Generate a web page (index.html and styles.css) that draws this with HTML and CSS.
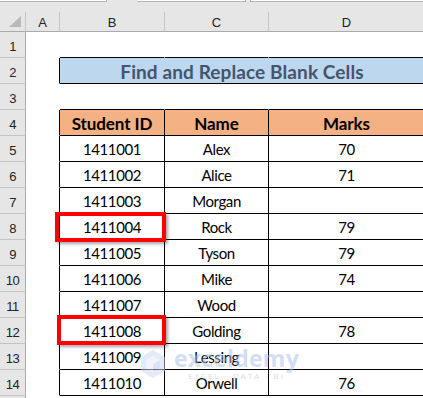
FILE: index.html
```html
<!DOCTYPE html>
<html lang="en">
<head>
    <meta charset="UTF-8">
    <meta name="viewport" content="width=device-width, initial-scale=1.0">
    <title>Find and Replace Blank Cells</title>
    <link rel="stylesheet" href="styles.css">
</head>
<body>
    <div class="window">
        <div class="formula-bar">
            <span class="fbox name-box"></span>
            <span class="fbox fx-box"></span>
            <span class="fbox input-box"></span>
        </div>

        <div class="sheet">
            <!-- column headers -->
            <div class="ch corner"><span class="corner-mark"></span></div>
            <div class="ch">A</div>
            <div class="ch">B</div>
            <div class="ch">C</div>
            <div class="ch">D</div>

            <!-- row 1 -->
            <div class="rh">1</div>
            <div class="cell"></div>
            <div class="cell above"></div>
            <div class="cell above"></div>
            <div class="cell above"></div>

            <!-- row 2 -->
            <div class="rh">2</div>
            <div class="cell before"></div>
            <div class="cell tb title">Find and Replace Blank Cells</div>

            <!-- row 3 -->
            <div class="rh">3</div>
            <div class="cell"></div>
            <div class="cell above"></div>
            <div class="cell above"></div>
            <div class="cell above"></div>

            <!-- row 4 -->
            <div class="rh">4</div>
            <div class="cell before"></div>
            <div class="cell tb head">Student ID</div>
            <div class="cell tb head">Name</div>
            <div class="cell tb head">Marks</div>

            <div class="rh">5</div>
            <div class="cell before"></div>
            <div class="cell tb">1411001</div>
            <div class="cell tb">Alex</div>
            <div class="cell tb">70</div>

            <div class="rh">6</div>
            <div class="cell before"></div>
            <div class="cell tb">1411002</div>
            <div class="cell tb">Alice</div>
            <div class="cell tb">71</div>

            <div class="rh">7</div>
            <div class="cell before"></div>
            <div class="cell tb">1411003</div>
            <div class="cell tb">Morgan</div>
            <div class="cell tb"></div>

            <div class="rh">8</div>
            <div class="cell before"></div>
            <div class="cell tb">1411004</div>
            <div class="cell tb">Rock</div>
            <div class="cell tb">79</div>

            <div class="rh">9</div>
            <div class="cell before"></div>
            <div class="cell tb">1411005</div>
            <div class="cell tb">Tyson</div>
            <div class="cell tb">79</div>

            <div class="rh">10</div>
            <div class="cell before"></div>
            <div class="cell tb">1411006</div>
            <div class="cell tb">Mike</div>
            <div class="cell tb">74</div>

            <div class="rh">11</div>
            <div class="cell before"></div>
            <div class="cell tb">1411007</div>
            <div class="cell tb">Wood</div>
            <div class="cell tb"></div>

            <div class="rh">12</div>
            <div class="cell before"></div>
            <div class="cell tb">1411008</div>
            <div class="cell tb">Golding</div>
            <div class="cell tb">78</div>

            <div class="rh">13</div>
            <div class="cell before"></div>
            <div class="cell tb">1411009</div>
            <div class="cell tb">Lessing</div>
            <div class="cell tb"></div>

            <div class="rh">14</div>
            <div class="cell before"></div>
            <div class="cell tb">1411010</div>
            <div class="cell tb">Orwell</div>
            <div class="cell tb">76</div>

            <div class="rh"></div>
            <div class="cell"></div>
            <div class="cell"></div>
            <div class="cell"></div>
            <div class="cell"></div>

            <!-- highlight boxes around the IDs with blank marks -->
            <span class="mark mark-one"></span>
            <span class="mark mark-two"></span>

            <div class="watermark">
                <svg class="wm-logo" width="26" height="30" viewBox="0 0 26 30">
                    <path d="M13 1 L25 8 L25 22 L13 29 L1 22 L1 8 Z" fill="#c9d6f2"/>
                    <path d="M13 7 L20 11 L20 19 L13 23 L6 19 L6 11 Z" fill="#e4ebf9"/>
                    <path d="M13 15 L20 11 L20 19 L13 23 Z" fill="#b7c8ee"/>
                </svg>
                <div class="wm-text">
                    <span class="wm-name">exceldemy</span>
                    <span class="wm-tag">EXCEL · DATA · BI</span>
                </div>
            </div>
        </div>
    </div>
</body>
</html>
```

FILE: styles.css
```css
body {
    margin: 0;
    padding: 0;
    overflow: hidden;
    width: 423px;
    height: 398px;
    background: #fff;
    font-family: 'Lato', 'Open Sans', sans-serif;
    color: #000;
}
.window {
    width: 423px;
    height: 398px;
    overflow: hidden;
}
.formula-bar {
    height: 12px;
    background: #e6e6e6;
    position: relative;
}
.fbox {
    position: absolute;
    top: 0;
    height: 1px;
    background: #fff;
    border-bottom: 1px solid #b4b4b4;
}
.name-box { left: 0; width: 106px; border-right: 1px solid #b4b4b4; }
.fx-box { left: 137px; width: 108px; border-right: 1px solid #b4b4b4; }
.input-box { left: 250px; width: 180px; border-left: 1px solid #b4b4b4; }

.sheet {
    position: relative;
    display: grid;
    grid-template-columns: 26px 34px 105px 104px 156px;
    grid-template-rows: 20px;
    grid-auto-rows: 26px;
    width: 425px;
}
.sheet > div {
    box-sizing: border-box;
}
.ch {
    background: #e6e6e6;
    border-right: 1px solid #c4c4c4;
    border-bottom: 1px solid #ababab;
    font-family: 'Liberation Sans', sans-serif;
    font-size: 13px;
    color: #222;
    display: flex;
    align-items: center;
    justify-content: center;
    padding-top: 1px;
}
.corner {
    position: relative;
}
.corner-mark {
    position: absolute;
    right: 4px;
    bottom: 4px;
    width: 0;
    height: 0;
    border-left: 12px solid transparent;
    border-bottom: 11px solid #b9b9b9;
}
.rh {
    background: #e6e6e6;
    border-right: 1px solid #ababab;
    border-bottom: 1px solid #c4c4c4;
    font-family: 'Liberation Sans', sans-serif;
    font-size: 13px;
    letter-spacing: -0.5px;
    color: #222;
    display: flex;
    align-items: center;
    justify-content: center;
    padding-top: 3px;
}
.cell {
    border-right: 1px solid transparent;
    border-bottom: 1px solid transparent;
    display: flex;
    align-items: center;
    justify-content: center;
    font-size: 15px;
    letter-spacing: -0.4px;
    padding-top: 1px;
}
.cell.above { border-bottom-color: #000; }
.cell.before { border-right-color: #000; }
.cell.tb {
    border-right-color: #000;
    border-bottom-color: #000;
}
.title {
    grid-column: 3 / span 3;
    background: #bdd7ee;
    color: #44546a;
    font-weight: 700;
    font-size: 19px;
    letter-spacing: 0.1px;
}
.head {
    background: #f4b183;
    font-weight: 700;
    font-size: 17px;
    letter-spacing: -0.1px;
}

.mark {
    position: absolute;
    box-sizing: border-box;
    border: 4px solid #f00;
    box-shadow: 2px 2px 3px rgba(0, 0, 0, 0.35);
}
.mark-one { left: 55px; top: 200px; width: 111px; height: 30px; }
.mark-two { left: 57px; top: 303px; width: 109px; height: 30px; }

.watermark {
    position: absolute;
    left: 140px;
    top: 335px;
    display: flex;
    align-items: center;
    gap: 8px;
    opacity: 0.5;
    pointer-events: none;
}
.wm-text {
    display: flex;
    flex-direction: column;
    align-items: center;
    line-height: 1;
}
.wm-name {
    font-family: 'Open Sans', sans-serif;
    font-weight: 700;
    font-size: 23px;
    color: #a9bde8;
    letter-spacing: 0.2px;
}
.wm-tag {
    font-family: 'Open Sans', sans-serif;
    font-size: 8px;
    color: #b8b8b8;
    letter-spacing: 2px;
    margin-top: 2px;
}
```
